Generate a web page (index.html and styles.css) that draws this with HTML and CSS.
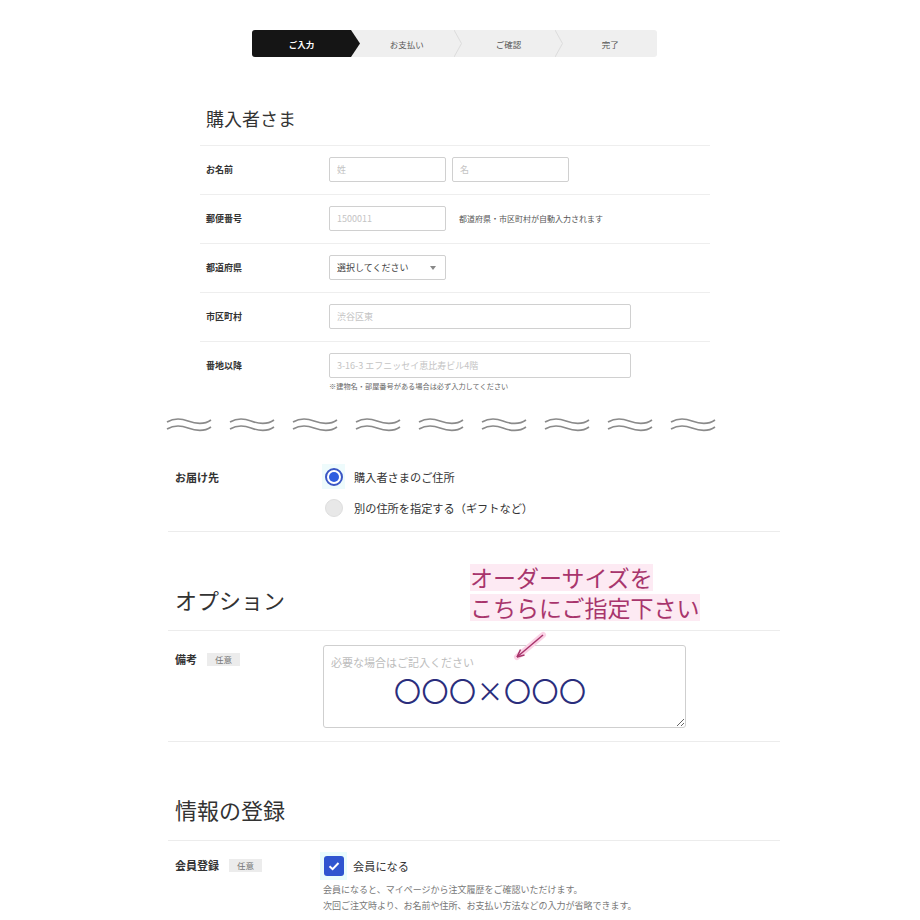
FILE: index.html
```html
<!DOCTYPE html>
<html lang="ja">
<head>
    <meta charset="UTF-8">
    <meta name="viewport" content="width=device-width, initial-scale=1.0">
    <title>ご入力</title>
    <link rel="stylesheet" href="styles.css">
</head>
<body>
    <!-- step bar -->
    <div class="steps">
        <div class="step current">ご入力</div>
        <div class="step">お支払い</div>
        <svg class="chev" width="8" height="27" viewBox="0 0 8 27"><path d="M0 0 L7.5 13.5 L0 27" fill="none" stroke="#dcdcdc" stroke-width="1"/></svg>
        <div class="step">ご確認</div>
        <svg class="chev" width="8" height="27" viewBox="0 0 8 27"><path d="M0 0 L7.5 13.5 L0 27" fill="none" stroke="#dcdcdc" stroke-width="1"/></svg>
        <div class="step">完了</div>
    </div>

    <!-- buyer (top screenshot, smaller scale) -->
    <div class="buyer">
        <h2 class="buyer-title">購入者さま</h2>
        <div class="brow">
            <div class="blabel">お名前</div>
            <div class="bfield">
                <input class="binput short" placeholder="姓">
                <input class="binput short" placeholder="名">
            </div>
        </div>
        <div class="brow">
            <div class="blabel">郵便番号</div>
            <div class="bfield">
                <input class="binput short" placeholder="1500011">
                <span class="bhint">都道府県・市区町村が自動入力されます</span>
            </div>
        </div>
        <div class="brow">
            <div class="blabel">都道府県</div>
            <div class="bfield">
                <div class="bselect">選択してください</div>
            </div>
        </div>
        <div class="brow">
            <div class="blabel">市区町村</div>
            <div class="bfield">
                <input class="binput long" placeholder="渋谷区東">
            </div>
        </div>
        <div class="brow last">
            <div class="blabel">番地以降</div>
            <div class="bfield col">
                <input class="binput long" placeholder="3-16-3 エフニッセイ恵比寿ビル4階">
                <span class="bnote">※建物名・部屋番号がある場合は必ず入力してください</span>
            </div>
        </div>
    </div>

    <!-- break marks between the two screenshots -->
    <div class="waves">
        <svg width="560" height="20" viewBox="0 0 560 20">
            <defs>
                <g id="wave">
                    <path d="M1 6 C 8 2, 14 2, 22 5 S 38 9, 45 4" fill="none" stroke="#8a8a8a" stroke-width="1.6"/>
                    <path d="M1 13 C 8 9, 14 9, 22 12 S 38 16, 45 11" fill="none" stroke="#8a8a8a" stroke-width="1.6"/>
                </g>
            </defs>
            <use href="#wave" x="6"/>
            <use href="#wave" x="69"/>
            <use href="#wave" x="132"/>
            <use href="#wave" x="195"/>
            <use href="#wave" x="258"/>
            <use href="#wave" x="321"/>
            <use href="#wave" x="384"/>
            <use href="#wave" x="447"/>
            <use href="#wave" x="510"/>
        </svg>
    </div>

    <!-- lower screenshot -->
    <div class="lower">
        <div class="row delivery">
            <div class="label">お届け先</div>
            <div class="field">
                <label class="choice">
                    <span class="hl"><span class="radio on"></span></span>
                    購入者さまのご住所
                </label>
                <label class="choice">
                    <span class="hl plain"><span class="radio"></span></span>
                    別の住所を指定する（ギフトなど）
                </label>
            </div>
        </div>

        <div class="section options">
            <h2 class="section-title">オプション</h2>
            <div class="callout">
                <span class="mark">オーダーサイズを</span><br>
                <span class="mark">こちらにご指定下さい</span>
            </div>
            <svg class="arrow" width="40" height="36" viewBox="0 0 40 36">
                <path d="M33 6 L7 28" stroke="#fbd3e6" stroke-width="6" fill="none" stroke-linecap="round"/>
                <path d="M33 6 L7 28" stroke="#a8356c" stroke-width="1.5" fill="none"/>
                <path d="M7 28 L10.5 20.5 M7 28 L14.5 26" stroke="#a8356c" stroke-width="1.5" fill="none"/>
            </svg>
        </div>

        <div class="row remark">
            <div class="label">備考 <span class="badge">任意</span></div>
            <div class="field">
                <div class="area-wrap">
                    <textarea class="area" placeholder="必要な場合はご記入ください"></textarea>
                    <span class="size-text">〇〇〇×〇〇〇</span>
                </div>
            </div>
        </div>

        <div class="section">
            <h2 class="section-title">情報の登録</h2>
        </div>

        <div class="row member">
            <div class="label">会員登録 <span class="badge">任意</span></div>
            <div class="field">
                <label class="choice">
                    <span class="hl box"><span class="check">
                        <svg width="20" height="20" viewBox="0 0 20 20"><path d="M5.5 10.2 L8.6 13.2 L14.5 7" fill="none" stroke="#fff" stroke-width="2"/></svg>
                    </span></span>
                    会員になる
                </label>
                <p class="note">会員になると、マイページから注文履歴をご確認いただけます。<br>次回ご注文時より、お名前や住所、お支払い方法などの入力が省略できます。</p>
            </div>
        </div>
    </div>
</body>
</html>
```

FILE: styles.css
```css
body { margin: 0; background: #fff; color: #333; font-family: "Noto Sans CJK JP", "Noto Sans", sans-serif; width: 920px; height: 920px; overflow: hidden; }

/* step bar */
.steps { display: flex; width: 405px; height: 27px; margin: 30px 0 0 252px; background: #efefef; border-radius: 3px; }
.step { flex: 1; display: flex; align-items: center; justify-content: center; font-size: 8.5px; color: #555; }
.step.current { flex: 0 0 108px; padding-right: 9px; box-sizing: border-box; background: #151515; color: #fff; font-weight: bold; border-radius: 3px 0 0 3px; clip-path: polygon(0 0, 99px 0, 108px 50%, 99px 100%, 0 100%); }
.chev { flex: 0 0 8px; display: block; }

/* buyer block */
.buyer { width: 510px; margin-left: 200px; }
.buyer-title { margin: 49px 0 0; padding: 0 0 15px 6px; font-size: 18px; line-height: 24px; font-weight: normal; color: #333; }
.brow { display: grid; grid-template-columns: 123px 1fr; align-items: center; height: 49px; box-sizing: border-box; padding: 11px 0 12px 6px; border-top: 1px solid #eee; }
.brow.last { height: 57px; align-items: start; padding-bottom: 0; }
.brow.last .blabel { line-height: 25px; }
.blabel { font-size: 9px; font-weight: bold; color: #333; }
.bfield { display: flex; align-items: center; gap: 6px; }
.bfield.col { flex-direction: column; align-items: flex-start; gap: 0; }
.binput { height: 25px; box-sizing: border-box; border: 1px solid #d0d0d0; border-radius: 2px; padding: 0 7px; font-family: inherit; font-size: 9px; color: #333; outline: none; }
.binput::placeholder { color: #c4c4c4; }
.binput.short { width: 117px; }
.binput.long { width: 302px; }
.bhint { margin-left: 7px; font-size: 8px; color: #555; }
.bnote { margin-top: 3px; font-size: 7.2px; line-height: 10px; color: #666; }
.bselect { position: relative; width: 117px; height: 25px; box-sizing: border-box; border: 1px solid #d0d0d0; border-radius: 2px; padding-left: 7px; font-size: 9px; line-height: 23px; color: #444; }
.bselect::after { content: ""; position: absolute; right: 9px; top: 10px; border-left: 3.5px solid transparent; border-right: 3.5px solid transparent; border-top: 4px solid #888; }

/* break marks */
.waves { height: 60px; box-sizing: border-box; padding: 18px 0 0 160px; }
.waves svg { display: block; }

/* lower block */
.lower { width: 612px; margin-left: 168px; }
.row { display: grid; grid-template-columns: 148px 1fr; align-items: start; box-sizing: border-box; padding-left: 7px; border-bottom: 1px solid #ececec; }
.label { font-size: 11px; font-weight: bold; color: #333; line-height: 22px; display: flex; align-items: center; gap: 10px; }
.badge { display: inline-block; background: #ececec; color: #777; font-size: 8.5px; font-weight: normal; line-height: 13px; padding: 0 8px; }
.field { display: flex; flex-direction: column; }

.delivery { padding-top: 8px; padding-bottom: 12px; }
.delivery .field { gap: 9px; }
.choice { display: flex; align-items: center; gap: 9px; height: 22px; font-size: 11.2px; color: #333; }
.hl { display: flex; align-items: center; justify-content: center; box-sizing: border-box; width: 23px; height: 25px; margin: -2px 0 -1px -1px; background: #eefbfc; }
.hl.plain { background: transparent; }
.radio { width: 18px; height: 18px; box-sizing: border-box; border-radius: 50%; background: #e8e8e8; border: 1px solid #dedede; }
.radio.on { background: #fff; border: 2px solid #3b57c4; display: flex; align-items: center; justify-content: center; }
.radio.on::before { content: ""; width: 10px; height: 10px; border-radius: 50%; background: #2f5ddf; }

.section { position: relative; height: 99px; box-sizing: border-box; padding: 52px 0 0 7px; border-bottom: 1px solid #ececec; }
.section-title { margin: 0; font-size: 22px; line-height: 30px; font-weight: normal; color: #333; }

.callout { position: absolute; left: 302px; top: 30px; font-size: 23px; line-height: 30px; color: #a8356c; z-index: 2; }
.mark { background: #fdeaf3; line-height: 27px; display: inline-block; }
.arrow { position: absolute; left: 342px; top: 97px; z-index: 2; }

.remark { padding-top: 14px; padding-bottom: 13px; }
.remark .label { line-height: 28px; }
.area-wrap { position: relative; width: 363px; }
.area { display: block; width: 363px; height: 83px; box-sizing: border-box; border: 1px solid #cfcfcf; border-radius: 3px; padding: 8px 7px; font-family: inherit; font-size: 11px; resize: vertical; outline: none; }
.area::placeholder { color: #bdbdbd; }
.size-text { position: absolute; left: 71px; top: 31px; font-size: 27px; line-height: 30px; color: #2a2d7c; letter-spacing: 0.5px; }

.section + .member { border-bottom: none; }
.member { padding-top: 14px; }
.member .label { line-height: 20px; }
.hl.box { background: #e9fcfd; width: 27px; height: 28px; margin: -4px -3px -4px -3px; }
.check { width: 20px; height: 20px; border-radius: 3px; background: #2f55d0; display: block; }
.check svg { display: block; }
.note { margin: 5px 0 0; font-size: 9px; line-height: 16px; color: #777; }
```
